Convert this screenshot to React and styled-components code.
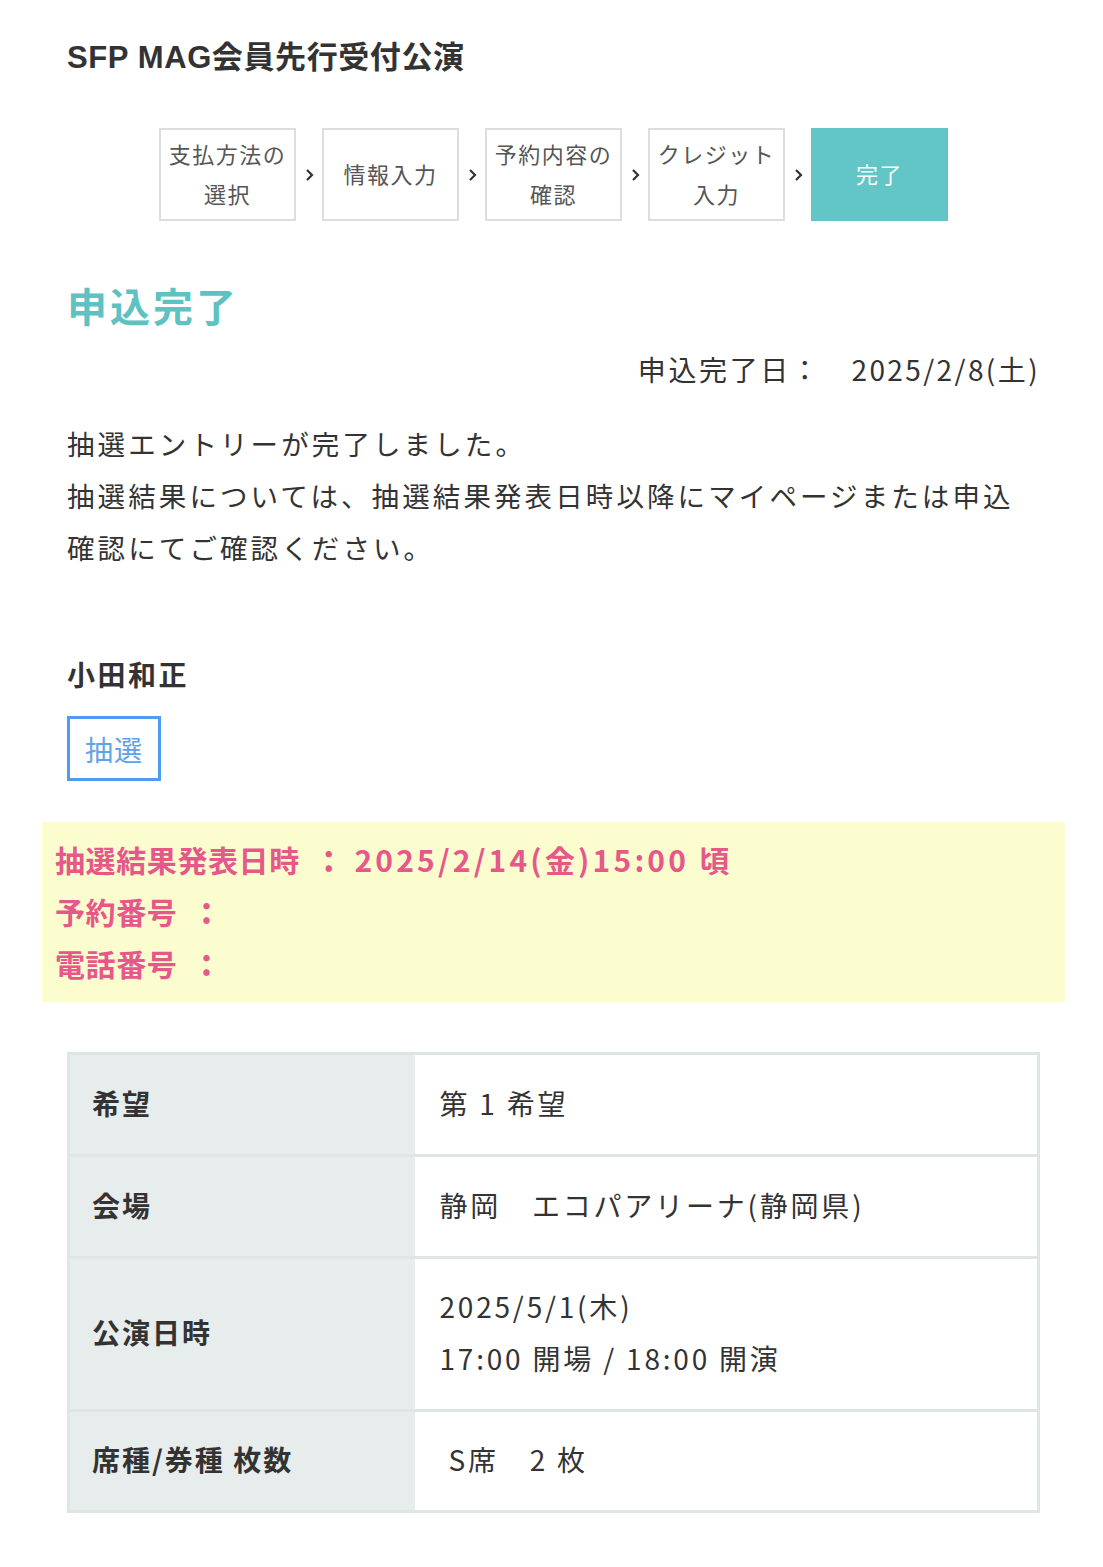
import React from 'react';
import styled, { createGlobalStyle } from 'styled-components';

const GlobalStyle = createGlobalStyle`
  body {
    margin: 0;
    background: #fff;
    font-family: "Noto Sans CJK JP", "Noto Sans", sans-serif;
    color: #333;
  }
`;

const Page = styled.div`
  padding: 35px 63px 60px 67px;
`;

const Title = styled.h1`
  margin: 0;
  font-family: "Liberation Sans", "Noto Sans CJK JP", sans-serif;
  font-size: 31px;
  line-height: 45px;
  font-weight: 700;
  color: #333;
  letter-spacing: 0.6px;
`;

const Steps = styled.ol`
  list-style: none;
  margin: 48px 0 0;
  padding: 0;
  display: flex;
  justify-content: center;
  align-items: center;
`;

const Step = styled.li`
  box-sizing: border-box;
  width: 137px;
  height: 93px;
  padding-bottom: 3px;
  display: flex;
  align-items: center;
  justify-content: center;
  text-align: center;
  font-size: 22px;
  line-height: 40px;
  letter-spacing: 1.5px;
  color: ${p => (p.$current ? '#fff' : '#555')};
  background: ${p => (p.$current ? '#62c5c6' : '#fff')};
  border: 2px solid ${p => (p.$current ? '#62c5c6' : '#ddd')};
`;

const Arrow = styled.span`
  width: 26px;
  display: flex;
  justify-content: center;
  svg { display: block; }
`;

const Heading = styled.h2`
  margin: 54px 0 0;
  font-size: 40px;
  line-height: 60px;
  font-weight: 700;
  color: #5fc2c2;
  letter-spacing: 3px;
`;

const DoneDate = styled.p`
  margin: 13px 0 0;
  text-align: right;
  font-size: 28px;
  line-height: 42px;
  letter-spacing: 2.6px;
  color: #333;
  span { margin-left: 30px; letter-spacing: 2.4px; }
`;

const Message = styled.p`
  margin: 27px 0 0;
  font-size: 27.5px;
  line-height: 52px;
  letter-spacing: 3.1px;
  color: #333;
`;

const Name = styled.h3`
  margin: 80px 0 0;
  font-size: 28px;
  line-height: 42px;
  font-weight: 700;
  color: #333;
  letter-spacing: 2.5px;
`;

const Badge = styled.div`
  box-sizing: border-box;
  margin-top: 21px;
  width: 94px;
  height: 65px;
  border: 3px solid #4f9cf0;
  display: flex;
  align-items: center;
  justify-content: center;
  font-size: 28px;
  color: #5ea2ea;
  letter-spacing: 1px;
`;

const Notice = styled.div`
  margin: 41px -25px 0 -25px;
  padding: 11px 13px 13px;
  background: #fbfdcf;
`;

const NoticeLine = styled.p`
  margin: 0;
  font-size: 30px;
  line-height: 52px;
  font-weight: 700;
  color: #e6588a;
  letter-spacing: 0.6px;
  b { margin: 0 10px 0 14px; }
  span { letter-spacing: 3.2px; }
`;

const Table = styled.table`
  margin-top: 50px;
  width: 100%;
  border-collapse: collapse;
  border: 3px solid #dfe5e5;
`;

const Row = styled.tr`
  border-bottom: 3px solid #dfe5e5;
  height: ${p => p.$h}px;
`;

const Label = styled.th`
  width: 346px;
  box-sizing: border-box;
  padding: 0 0 4px 22px;
  background: #e7ecec;
  text-align: left;
  font-size: 28px;
  font-weight: 700;
  color: #333;
  letter-spacing: 2px;
`;

const Value = styled.td`
  padding: 0 0 4px 25px;
  font-size: 28px;
  line-height: 52px;
  color: #333;
  letter-spacing: 2.8px;
`;

const Chevron = () => (
  <svg width="9" height="14" viewBox="0 0 9 14">
    <path d="M2 2l5 5-5 5" fill="none" stroke="#333" strokeWidth="2.2" />
  </svg>
);

const steps = [
  ['支払方法の', '選択'],
  ['情報入力'],
  ['予約内容の', '確認'],
  ['クレジット', '入力'],
  ['完了'],
];

export default function App() {
  return (
    <Page>
      <GlobalStyle />
      <Title>SFP MAG会員先行受付公演</Title>
      <Steps>
        {steps.map((lines, i) => (
          <React.Fragment key={i}>
            {i > 0 && (
              <Arrow>
                <Chevron />
              </Arrow>
            )}
            <Step $current={i === steps.length - 1}>
              <div>
                {lines.map((l, j) => (
                  <div key={j}>{l}</div>
                ))}
              </div>
            </Step>
          </React.Fragment>
        ))}
      </Steps>

      <Heading>申込完了</Heading>
      <DoneDate>
        申込完了日：<span>2025/2/8(土)</span>
      </DoneDate>
      <Message>
        抽選エントリーが完了しました。
        <br />
        抽選結果については、抽選結果発表日時以降にマイページまたは申込確認にてご確認ください。
      </Message>

      <Name>小田和正</Name>
      <Badge>抽選</Badge>

      <Notice>
        <NoticeLine>
          抽選結果発表日時<b>：</b><span>2025/2/14(金)15:00 頃</span>
        </NoticeLine>
        <NoticeLine>
          予約番号<b>：</b>
        </NoticeLine>
        <NoticeLine>
          電話番号<b>：</b>
        </NoticeLine>
      </Notice>

      <Table>
        <tbody>
          <Row $h={102}>
            <Label>希望</Label>
            <Value>第 1 希望</Value>
          </Row>
          <Row $h={102}>
            <Label>会場</Label>
            <Value>静岡　エコパアリーナ(静岡県)</Value>
          </Row>
          <Row $h={153}>
            <Label>公演日時</Label>
            <Value>
              2025/5/1(木)
              <br />
              17:00 開場 / 18:00 開演
            </Value>
          </Row>
          <Row $h={101}>
            <Label>席種/券種 枚数</Label>
            <Value>&nbsp;S席　2 枚</Value>
          </Row>
        </tbody>
      </Table>
    </Page>
  );
}
